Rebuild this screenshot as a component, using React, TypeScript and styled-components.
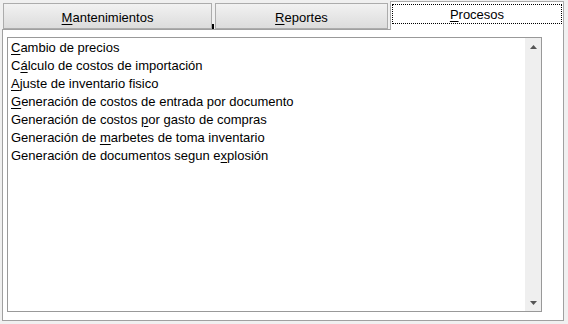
import React from "react"
import styled, { createGlobalStyle } from "styled-components"

const GlobalStyle = createGlobalStyle`
  html, body {
    margin: 0;
    padding: 0;
    background: #f0f0f0;
  }
  body {
    font-family: "Liberation Sans", Arial, sans-serif;
    font-size: 13px;
    color: #000;
  }
`

const Window = styled.div`
  width: 568px;
  height: 324px;
  box-sizing: border-box;
  padding: 1px 4px 0 2px;
  background: #f0f0f0;
`

const TabRow = styled.div`
  display: flex;
  align-items: flex-end;
  height: 28px;
  padding-left: 1px;
`

const Tab = styled.div<{ $width: number; $active?: boolean }>`
  box-sizing: border-box;
  width: ${p => p.$width}px;
  height: ${p => (p.$active ? 29 : 26)}px;
  margin-bottom: ${p => (p.$active ? -1 : 0)}px;
  position: relative;
  z-index: ${p => (p.$active ? 1 : 0)};
  border: 1px solid #acacac;
  border-bottom: ${p => (p.$active ? "none" : "1px solid #acacac")};
  background: ${p => (p.$active ? "#fff" : "linear-gradient(#f2f2f2, #dcdcdc)")};
  display: flex;
  align-items: ${p => (p.$active ? "flex-start" : "center")};
  justify-content: center;
  padding: ${p => (p.$active ? "2px 1px 0 1px" : "2px 0 0 0")};
`

const FocusBox = styled.div`
  box-sizing: border-box;
  width: 100%;
  height: 20px;
  border: 1px dotted #000;
  display: flex;
  align-items: center;
  justify-content: center;
`

const Notch = styled.div`
  width: 2px;
  height: 5px;
  margin: 0 1px 0 0;
  background: #000;
`

const Gap = styled.div`
  width: 2px;
`

const Panel = styled.div`
  box-sizing: border-box;
  height: 292px;
  border: 1px solid #a0a0a0;
  background: #fff;
  padding: 7px 21px 8px 4px;
`

const ListBox = styled.div`
  box-sizing: border-box;
  height: 100%;
  border: 1px solid #999;
  display: flex;
`

const Items = styled.ul`
  flex: 1;
  margin: 0;
  padding: 1px 0 0 3px;
  list-style: none;
`

const Item = styled.li`
  height: 18px;
  line-height: 18px;
  white-space: nowrap;
`

const Key = styled.span`
  text-decoration: underline;
  text-underline-offset: 2px;
`

const ScrollBar = styled.div`
  width: 16px;
  background: #efefef;
  display: flex;
  flex-direction: column;
  justify-content: space-between;
`

const Arrow = styled.div`
  height: 17px;
  display: flex;
  align-items: center;
  justify-content: center;
`

const items: [string, string, string][] = [
  ["", "C", "ambio de precios"],
  ["C", "á", "lculo de costos de importación"],
  ["", "A", "juste de inventario fisico"],
  ["", "G", "eneración de costos de entrada por documento"],
  ["Generación de costos ", "p", "or gasto de compras"],
  ["Generación de ", "m", "arbetes de toma inventario"],
  ["Generación de documentos segun e", "x", "plosión"],
]

const ArrowIcon = ({ up }: { up?: boolean }) => (
  <svg width="7" height="4" viewBox="0 0 7 4">
    <path d={up ? "M0 4 L3.5 0 L7 4 Z" : "M0 0 L3.5 4 L7 0 Z"} fill="#555" />
  </svg>
)

export default function App() {
  return (
    <Window>
      <GlobalStyle />
      <TabRow>
        <Tab $width={209}>
          <span>
            <Key>M</Key>antenimientos
          </span>
        </Tab>
        <Notch />
        <Tab $width={173}>
          <span>
            <Key>R</Key>eportes
          </span>
        </Tab>
        <Gap />
        <Tab $width={174} $active>
          <FocusBox>
            <span>
              <Key>P</Key>rocesos
            </span>
          </FocusBox>
        </Tab>
      </TabRow>
      <Panel>
        <ListBox>
          <Items>
            {items.map(([a, k, b], i) => (
              <Item key={i}>
                {a}
                <Key>{k}</Key>
                {b}
              </Item>
            ))}
          </Items>
          <ScrollBar>
            <Arrow>
              <ArrowIcon up />
            </Arrow>
            <Arrow>
              <ArrowIcon />
            </Arrow>
          </ScrollBar>
        </ListBox>
      </Panel>
    </Window>
  )
}
